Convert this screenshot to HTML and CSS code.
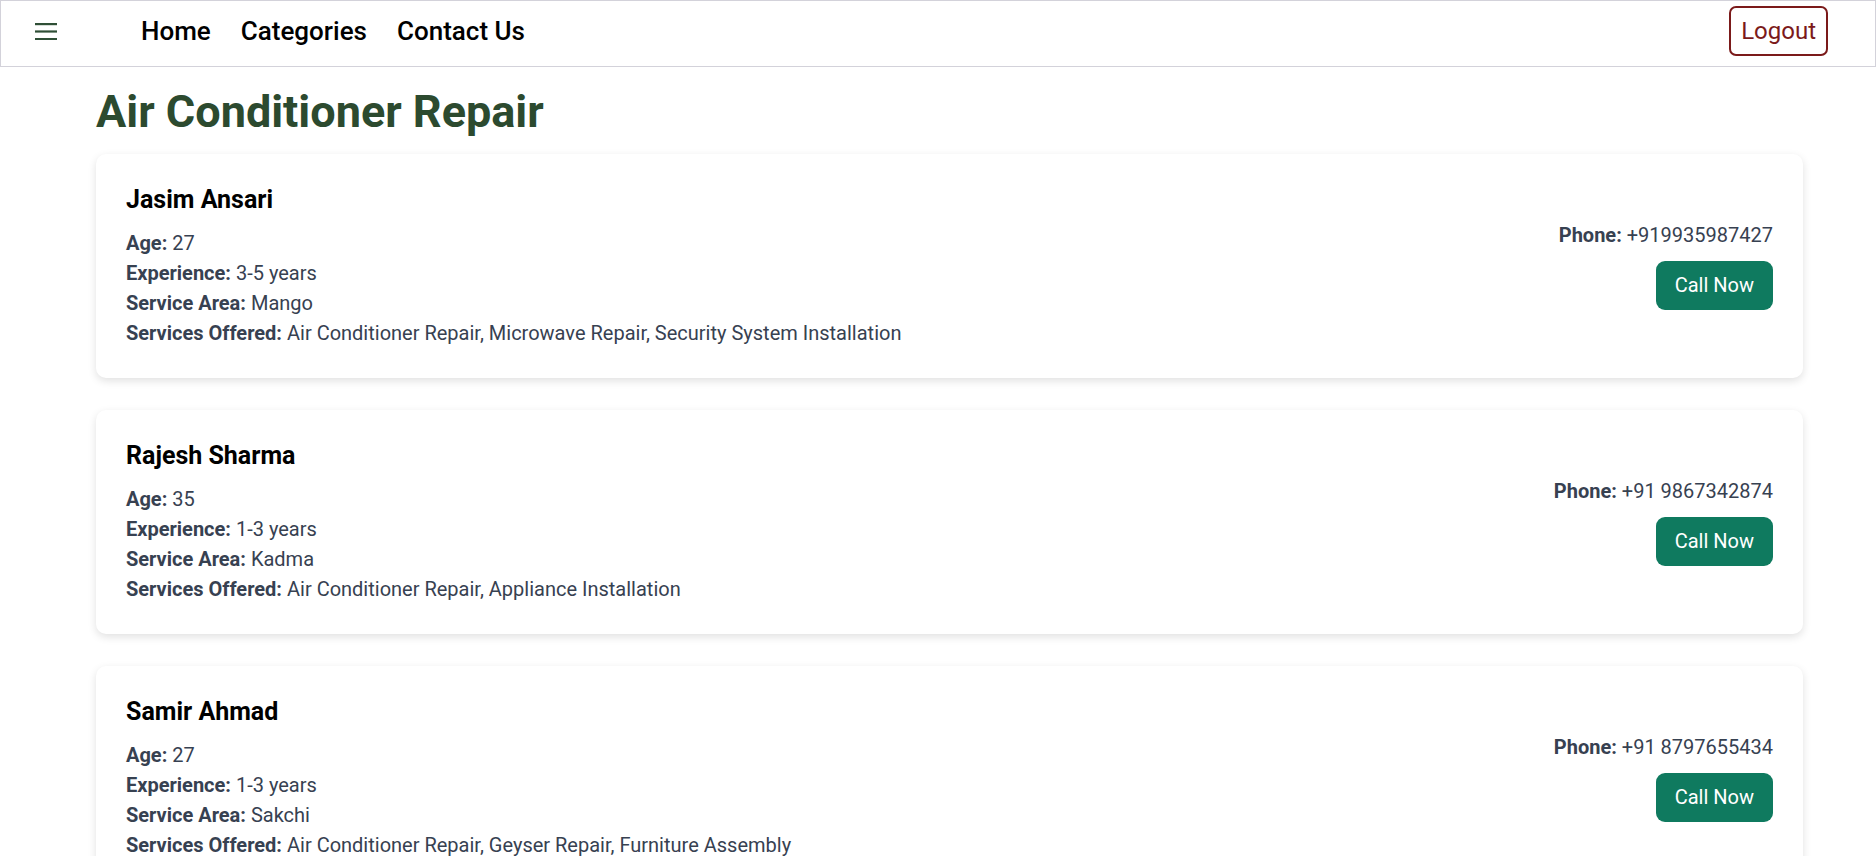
FILE: index.html
```html
<!DOCTYPE html>
<html lang="en">
<head>
<meta charset="utf-8">
<title>Air Conditioner Repair</title>
<link rel="stylesheet" href="styles.css">
</head>
<body>
<nav class="navbar">
  <button class="menu-btn" aria-label="Menu">
    <svg width="22" height="18" viewBox="0 0 22 18"><rect x="0" y="1" width="22" height="2.2" fill="#2f4f36"/><rect x="0" y="8.4" width="22" height="2.2" fill="#2f4f36"/><rect x="0" y="16" width="22" height="2.2" fill="#2f4f36"/></svg>
  </button>
  <ul class="nav-links">
    <li><a href="#">Home</a></li>
    <li><a href="#">Categories</a></li>
    <li><a href="#">Contact Us</a></li>
  </ul>
  <button class="logout">Logout</button>
</nav>
<main class="container">
  <h1 class="page-title">Air Conditioner Repair</h1>

  <div class="card">
    <div class="info">
      <h3 class="name">Jasim Ansari</h3>
      <p><b>Age:</b> 27</p>
      <p><b>Experience:</b> 3-5 years</p>
      <p><b>Service Area:</b> Mango</p>
      <p><b>Services Offered:</b> Air Conditioner Repair, Microwave Repair, Security System Installation</p>
    </div>
    <div class="contact">
      <p><b>Phone:</b> +919935987427</p>
      <button class="call">Call Now</button>
    </div>
  </div>

  <div class="card">
    <div class="info">
      <h3 class="name">Rajesh Sharma</h3>
      <p><b>Age:</b> 35</p>
      <p><b>Experience:</b> 1-3 years</p>
      <p><b>Service Area:</b> Kadma</p>
      <p><b>Services Offered:</b> Air Conditioner Repair, Appliance Installation</p>
    </div>
    <div class="contact">
      <p><b>Phone:</b> +91 9867342874</p>
      <button class="call">Call Now</button>
    </div>
  </div>

  <div class="card">
    <div class="info">
      <h3 class="name">Samir Ahmad</h3>
      <p><b>Age:</b> 27</p>
      <p><b>Experience:</b> 1-3 years</p>
      <p><b>Service Area:</b> Sakchi</p>
      <p><b>Services Offered:</b> Air Conditioner Repair, Geyser Repair, Furniture Assembly</p>
    </div>
    <div class="contact">
      <p><b>Phone:</b> +91 8797655434</p>
      <button class="call">Call Now</button>
    </div>
  </div>
</main>
</body>
</html>
```

FILE: styles.css
```css
* { box-sizing: border-box; }
html, body {
  margin: 0;
  padding: 0;
  background: #ffffff;
  font-family: Roboto, "Noto Sans", Arial, sans-serif;
}
.navbar {
  display: flex;
  align-items: center;
  height: 67px;
  border: 1px solid #d3d2da;
  padding: 0 47px 5px 28px;
  background: #fff;
}
.menu-btn {
  background: none;
  border: none;
  padding: 0;
  margin: 0 0 0 6px;
  width: 22px;
  height: 18px;
  display: flex;
  cursor: pointer;
}
.nav-links {
  list-style: none;
  display: flex;
  gap: 30px;
  margin: 0 0 0 84px;
  padding: 0;
  flex: 1;
}
.nav-links a {
  color: #000;
  text-decoration: none;
  font-size: 26px;
  font-weight: 500;
}
.logout {
  font-family: inherit;
  font-size: 24px;
  color: #7b1a1a;
  background: #fff;
  border: 2px solid #7b1a1a;
  border-radius: 7px;
  padding: 0 10px;
  height: 50px;
}
.container {
  margin: 0 73px 0 96px;
}
.page-title {
  font-size: 45px;
  font-weight: 700;
  color: #2c4a2f;
  margin: 19px 0 15px;
  line-height: 1.17;
}
.card {
  display: flex;
  justify-content: space-between;
  align-items: center;
  background: #fff;
  border-radius: 10px;
  padding: 30px;
  margin-bottom: 32px;
  box-shadow: 0 3px 8px rgba(0, 0, 0, 0.12);
}
.name {
  font-size: 25px;
  font-weight: 700;
  color: #000;
  margin: 0 0 12px;
  line-height: 32px;
}
.info p, .contact p {
  margin: 0;
  font-size: 20px;
  line-height: 30px;
  color: #374151;
}
.contact {
  display: flex;
  flex-direction: column;
  align-items: flex-end;
}
.contact p {
  line-height: 27px;
}
b { font-weight: 700; }
.call {
  margin-top: 12px;
  font-family: inherit;
  font-size: 20px;
  color: #fff;
  background: #0f7a5f;
  border: none;
  border-radius: 9px;
  height: 49px;
  padding: 0 19px;
}
```
